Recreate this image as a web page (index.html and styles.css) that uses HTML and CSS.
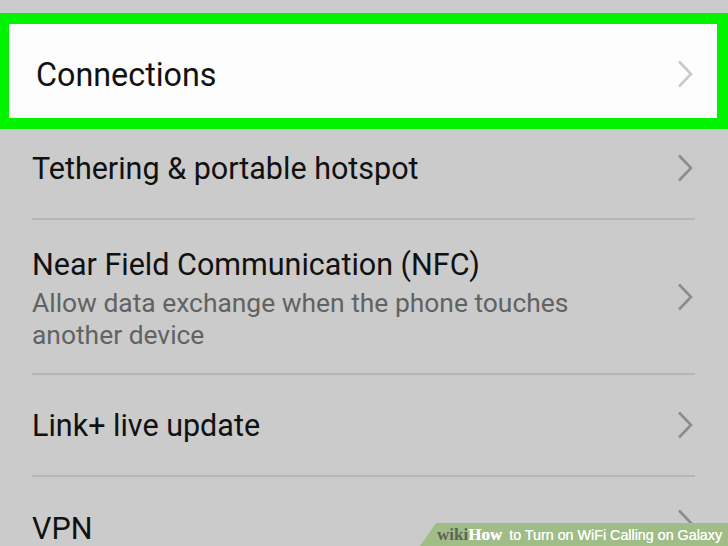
FILE: index.html
```html
<!DOCTYPE html>
<html lang="en">
<head>
    <meta charset="UTF-8">
    <meta name="viewport" content="width=device-width, initial-scale=1.0">
    <title>Connections</title>
    <link rel="stylesheet" href="styles.css">
</head>
<body>
    <div id="settings">
        <div class="row highlight">
            <div class="text">
                <div class="title connections">Connections</div>
            </div>
            <svg class="chevron light" viewBox="0 0 16 28" width="16" height="28"><path d="M2 1.5 L14 14 L2 26.5" /></svg>
        </div>

        <div class="row">
            <div class="text">
                <div class="title">Tethering &amp; portable hotspot</div>
            </div>
            <svg class="chevron" viewBox="0 0 16 28" width="16" height="28"><path d="M2 1.5 L14 14 L2 26.5" /></svg>
        </div>

        <div class="row tall">
            <div class="text">
                <div class="title">Near Field Communication (NFC)</div>
                <div class="summary">Allow data exchange when the phone touches another device</div>
            </div>
            <svg class="chevron" viewBox="0 0 16 28" width="16" height="28"><path d="M2 1.5 L14 14 L2 26.5" /></svg>
        </div>

        <div class="row">
            <div class="text">
                <div class="title">Link+ live update</div>
            </div>
            <svg class="chevron" viewBox="0 0 16 28" width="16" height="28"><path d="M2 1.5 L14 14 L2 26.5" /></svg>
        </div>

        <div class="row last">
            <div class="text">
                <div class="title">VPN</div>
            </div>
            <svg class="chevron" viewBox="0 0 16 28" width="16" height="28"><path d="M2 1.5 L14 14 L2 26.5" /></svg>
        </div>
    </div>

    <div id="banner">
        <span class="wiki">wiki</span><span class="how">How</span> to Turn on WiFi Calling on Galaxy
    </div>
</body>
</html>
```

FILE: styles.css
```css
/* General reset */
* {
    box-sizing: border-box;
    margin: 0;
    padding: 0;
}

html {
    overflow: hidden;
}

body {
    font-family: Roboto, 'Liberation Sans', sans-serif;
    background-color: #cbcbcb;
    color: #111;
    width: 728px;
    height: 546px;
    overflow: hidden;
    position: relative;
}

/* Settings list */
#settings {
    display: flex;
    flex-direction: column;
    padding-top: 24px;
}

.row {
    display: flex;
    align-items: center;
    height: 102px;
    margin: 0 33px 0 32px;
    border-bottom: 2px solid #b6b6b6;
}

.row.tall {
    height: 155px;
}

.row.last {
    height: 70px;
    border-bottom: none;
    align-items: flex-start;
    padding-top: 30px;
}

.row.highlight {
    height: 94px;
    margin: 0 11px 0 9px;
    padding: 6px 22px 0 27px;
    background-color: #fdfdfd;
    border-bottom: none;
    outline: 11px solid #00f400;
}

.text {
    flex: 1;
    padding-top: 2px;
}

.title {
    font-size: 30.5px;
    line-height: 40px;
    color: #111;
}

.title.connections {
    font-size: 32.3px;
}

.summary {
    font-size: 26.4px;
    line-height: 32px;
    color: #626262;
    margin-top: 2px;
    max-width: 580px;
}

.chevron {
    flex: none;
    margin-right: 2px;
}

.row.last .chevron {
    margin-top: 2px;
}

.chevron path {
    fill: none;
    stroke: #8c8c8c;
    stroke-width: 2.6;
}

.chevron.light path {
    stroke: #c9c9c9;
}

/* Watermark banner */
#banner {
    position: absolute;
    right: 0;
    bottom: 0;
    height: 23px;
    width: 308px;
    padding-left: 17px;
    background-color: #a0bd88;
    clip-path: polygon(16px 0, 100% 0, 100% 100%, 0 100%);
    font-family: 'Liberation Sans', Arial, sans-serif;
    font-size: 14.3px;
    line-height: 23px;
    color: #fff;
    text-shadow: 0 0 0.5px #fff;
    white-space: nowrap;
}

.wiki {
    font-family: 'Liberation Serif', serif;
    font-weight: bold;
    font-size: 17px;
    color: #5d6355;
    text-shadow: none;
}

.how {
    font-family: 'Liberation Serif', serif;
    font-weight: bold;
    font-size: 17px;
    margin-right: 3px;
}
```
